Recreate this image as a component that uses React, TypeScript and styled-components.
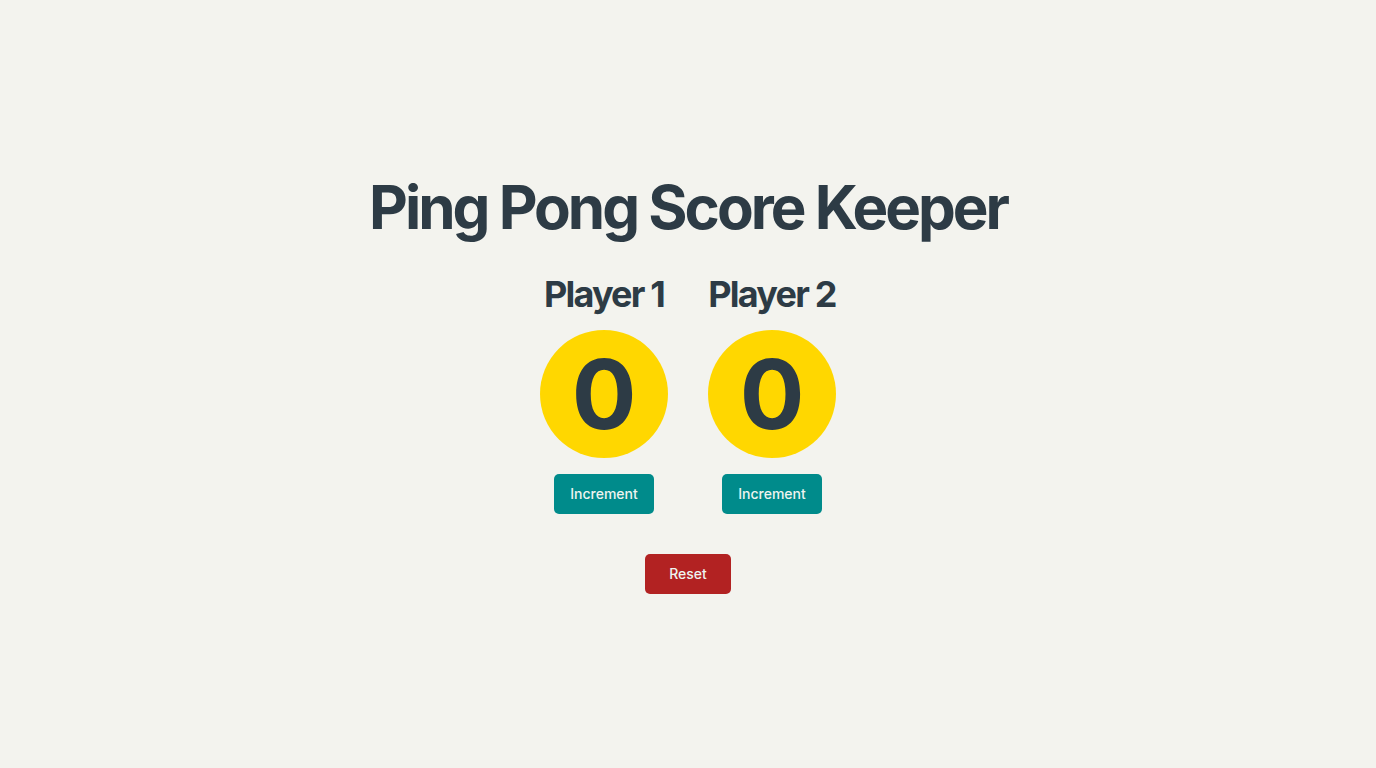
import { useState } from "react";
import styled, { createGlobalStyle } from "styled-components";

const GlobalStyle = createGlobalStyle`
  html, body {
    margin: 0;
    padding: 0;
    background: #f3f3ee;
  }
  * {
    box-sizing: border-box;
  }
`;

const Page = styled.main`
  min-height: 100vh;
  display: flex;
  flex-direction: column;
  align-items: center;
  justify-content: center;
  font-family: Inter, "Noto Sans", sans-serif;
  color: #2d3b45;
`;

const Title = styled.h1`
  margin: 0 0 34px;
  font-size: 60px;
  font-weight: 700;
  letter-spacing: -0.05em;
  line-height: 66px;
`;

const Players = styled.div`
  display: flex;
  gap: 40px;
`;

const PlayerCol = styled.section`
  width: 128px;
  display: flex;
  flex-direction: column;
  align-items: center;
`;

const PlayerName = styled.h2`
  margin: 0 0 16px;
  font-size: 36px;
  font-weight: 700;
  letter-spacing: -0.05em;
  line-height: 40px;
  white-space: nowrap;
`;

const Score = styled.div`
  width: 128px;
  height: 128px;
  border-radius: 50%;
  background: #ffd700;
  display: flex;
  align-items: center;
  justify-content: center;
  font-size: 96px;
  font-weight: 700;
  line-height: 1;
`;

const Button = styled.button<{ $variant?: "primary" | "danger" }>`
  height: 40px;
  padding: 0 16px 1px;
  border: none;
  border-radius: 5px;
  background: ${(p) => (p.$variant === "danger" ? "#b22222" : "#008b8b")};
  color: #eef4f0;
  font-family: Inter, "Noto Sans", sans-serif;
  font-size: 14px;
  font-weight: 500;
  cursor: pointer;
`;

const IncButton = styled(Button)`
  margin-top: 16px;
`;

const ResetButton = styled(Button)`
  margin-top: 40px;
  padding: 0 24px 1px;
`;

export default function App() {
  const [scores, setScores] = useState([0, 0]);

  const inc = (i: number) =>
    setScores((s) => s.map((v, j) => (j === i ? v + 1 : v)));

  return (
    <>
      <GlobalStyle />
      <Page>
        <Title>Ping Pong Score Keeper</Title>
        <Players>
          {scores.map((score, i) => (
            <PlayerCol key={i}>
              <PlayerName>Player {i + 1}</PlayerName>
              <Score>{score}</Score>
              <IncButton onClick={() => inc(i)}>Increment</IncButton>
            </PlayerCol>
          ))}
        </Players>
        <ResetButton $variant="danger" onClick={() => setScores([0, 0])}>
          Reset
        </ResetButton>
      </Page>
    </>
  );
}
